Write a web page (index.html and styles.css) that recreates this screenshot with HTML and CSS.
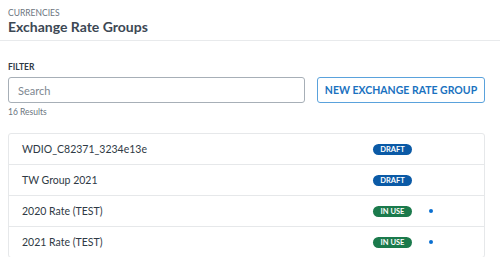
FILE: index.html
```html
<!DOCTYPE html>
<html lang="en">
<head>
    <meta charset="UTF-8">
    <meta name="viewport" content="width=device-width, initial-scale=1.0">
    <title>Exchange Rate Groups</title>
    <link rel="stylesheet" href="styles.css">
</head>
<body>
    <div class="page-header">
        <div class="crumb">CURRENCIES</div>
        <h1>Exchange Rate Groups</h1>
    </div>

    <div class="content">
        <div class="filter-label">FILTER</div>
        <div class="filter-row">
            <input type="text" class="search" placeholder="Search">
            <button class="new-btn">NEW EXCHANGE RATE GROUP</button>
        </div>
        <div class="results">16 Results</div>

        <div class="group-list">
            <div class="group-row">
                <span class="group-name">WDIO_C82371_3234e13e</span>
                <span class="badge draft">DRAFT</span>
                <span></span>
            </div>
            <div class="group-row">
                <span class="group-name">TW Group 2021</span>
                <span class="badge draft">DRAFT</span>
                <span></span>
            </div>
            <div class="group-row">
                <span class="group-name">2020 Rate (TEST)</span>
                <span class="badge in-use">IN USE</span>
                <span class="dot"></span>
            </div>
            <div class="group-row">
                <span class="group-name">2021 Rate (TEST)</span>
                <span class="badge in-use">IN USE</span>
                <span class="dot"></span>
            </div>
        </div>
    </div>
</body>
</html>
```

FILE: styles.css
```css
body {
    margin: 0;
    font-family: 'Lato', sans-serif;
    background-color: #ffffff;
    color: #2f3a45;
}
.page-header {
    padding: 8px 8px 0 8px;
    height: 32px;
    border-bottom: 1px solid #e8eaec;
}
.crumb {
    font-size: 8.5px;
    color: #6b7580;
    line-height: 10px;
}
.page-header h1 {
    margin: 0;
    font-size: 14px;
    font-weight: bold;
    color: #3c4854;
    line-height: 17px;
}
.content {
    padding: 21px 15px 0 8px;
}
.filter-label {
    font-size: 8.5px;
    font-weight: bold;
    color: #2f3a45;
    line-height: 10px;
}
.filter-row {
    display: flex;
    gap: 12px;
    margin-top: 5px;
}
.search {
    flex: 1;
    height: 26px;
    box-sizing: border-box;
    border: 1px solid #a7afb7;
    border-radius: 3px;
    padding: 0 9px;
    font-family: 'Lato', sans-serif;
    font-size: 11px;
    color: #2f3a45;
}
.search::placeholder {
    color: #7d8790;
}
.new-btn {
    width: 168px;
    height: 26px;
    box-sizing: border-box;
    background: #ffffff;
    border: 1px solid #5aa2dc;
    border-radius: 3px;
    color: #1a72c0;
    font-family: 'Lato', sans-serif;
    font-size: 10.5px;
    font-weight: bold;
    padding: 0;
}
.results {
    font-size: 8.5px;
    color: #6b7580;
    margin-top: 3px;
    line-height: 12px;
}
.group-list {
    margin-top: 15px;
    border: 1px solid #e6e8ea;
    border-radius: 3px;
}
.group-row {
    display: grid;
    grid-template-columns: 351px 56px auto;
    align-items: center;
    height: 30px;
    padding-left: 13px;
    border-bottom: 1px solid #e6e8ea;
    font-size: 10.5px;
    color: #2f3a45;
}
.group-row:last-child {
    border-bottom: none;
}
.badge {
    width: 39px;
    height: 11px;
    border-radius: 6px;
    color: #ffffff;
    font-size: 7.5px;
    font-weight: bold;
    text-align: center;
    line-height: 11px;
}
.badge.draft {
    background-color: #0b5aa6;
}
.badge.in-use {
    background-color: #1b7a4c;
}
.dot {
    width: 4px;
    height: 4px;
    border-radius: 50%;
    background-color: #0a6fd0;
}
```
